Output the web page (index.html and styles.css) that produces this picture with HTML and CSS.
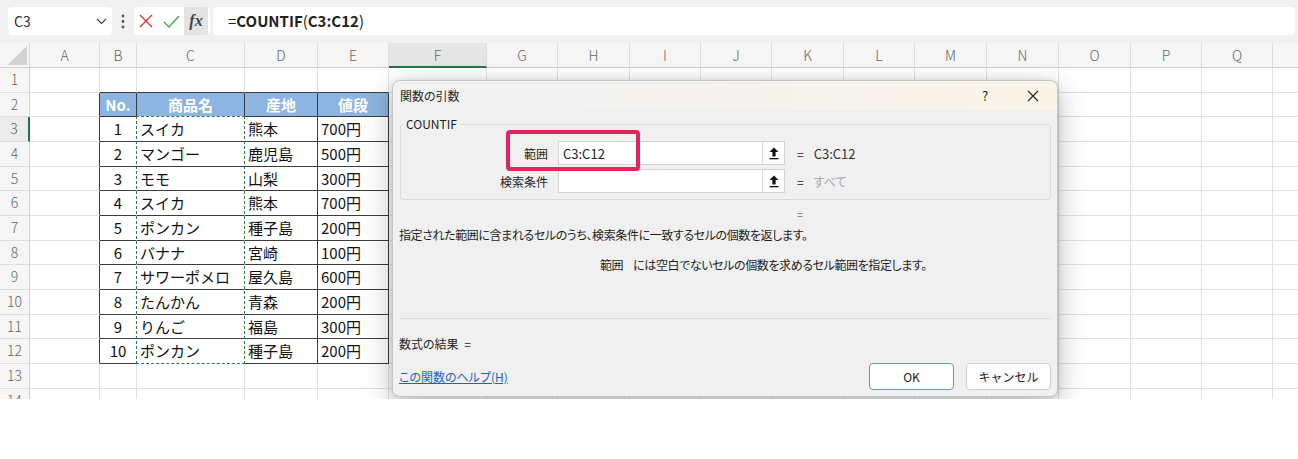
FILE: index.html
```html
<!DOCTYPE html>
<html lang="ja">
<head>
    <meta charset="UTF-8">
    <meta name="viewport" content="width=device-width, initial-scale=1.0">
    <title>関数の引数 | COUNTIF</title>
    <link rel="stylesheet" href="styles.css">
</head>
<body>
    <div class="app">
        <!-- 数式バー -->
        <div class="toolbar">
            <div class="namebox">
                <span>C3</span>
                <svg class="chev" width="11" height="7" viewBox="0 0 11 7"><path d="M1 1l4.5 4.5L10 1" fill="none" stroke="#444" stroke-width="1.2"/></svg>
            </div>
            <div class="grip">
                <svg width="4" height="15" viewBox="0 0 4 15"><circle cx="2" cy="2" r="1.4" fill="#555"/><circle cx="2" cy="7.5" r="1.4" fill="#555"/><circle cx="2" cy="13" r="1.4" fill="#555"/></svg>
            </div>
            <div class="fx-btns">
                <svg class="ico-x" width="14" height="14" viewBox="0 0 14 14"><path d="M1 1l12 12M13 1L1 13" stroke="#d13438" stroke-width="1.3"/></svg>
                <svg class="ico-ok" width="17" height="13" viewBox="0 0 17 13"><path d="M1 7l5 5L16 1" fill="none" stroke="#4f9e5a" stroke-width="1.3"/></svg>
                <span class="fx">fx</span>
            </div>
            <div class="formula">=<b>COUNTIF</b>(<b>C3:C12</b>)</div>
        </div>

        <!-- シート本体 (セルは script.js で生成) -->
        <div class="sheet" id="sheet">
            <div class="marquee"></div>
        </div>

        <!-- 関数の引数ダイアログ -->
        <div class="dlg">
            <div class="dlg-title">
                <span class="dlg-name">関数の引数</span>
                <span class="tbtn">?</span>
                <span class="tbtn">
                    <svg width="12" height="12" viewBox="0 0 12 12"><path d="M1 1l10 10M11 1L1 11" stroke="#222" stroke-width="1.1"/></svg>
                </span>
            </div>

            <fieldset class="grp">
                <legend>COUNTIF</legend>
                <div class="arg">
                    <label>範囲</label>
                    <div class="argbox">
                        <span class="argtext">C3:C12</span>
                        <span class="refbtn"><svg width="10" height="13" viewBox="0 0 10 13"><path d="M5 0.5L9.5 5H6.6v4.5H3.4V5H0.5z" fill="#111"/><rect x="0.5" y="11" width="9" height="1.3" fill="#111"/></svg></span>
                    </div>
                    <span class="eq">=</span>
                    <span class="argval">C3:C12</span>
                </div>
                <div class="arg">
                    <label>検索条件</label>
                    <div class="argbox">
                        <span class="argtext"></span>
                        <span class="refbtn"><svg width="10" height="13" viewBox="0 0 10 13"><path d="M5 0.5L9.5 5H6.6v4.5H3.4V5H0.5z" fill="#111"/><rect x="0.5" y="11" width="9" height="1.3" fill="#111"/></svg></span>
                    </div>
                    <span class="eq">=</span>
                    <span class="argval muted">すべて</span>
                </div>
            </fieldset>

            <div class="res-eq">=</div>
            <p class="desc">指定された範囲に含まれるセルのうち、検索条件に一致するセルの個数を返します。</p>
            <p class="pdesc"><span class="pname">範囲</span>には空白でないセルの個数を求めるセル範囲を指定します。</p>

            <div class="sep"></div>
            <div class="result">数式の結果 <span class="res-mark">=</span></div>

            <div class="dlg-foot">
                <a class="help" href="#">この関数のヘルプ(H)</a>
                <button class="btn btn-ok">OK</button>
                <button class="btn">キャンセル</button>
            </div>

            <!-- 強調枠 -->
            <div class="hilite"></div>
        </div>
    </div>

    <script src="script.js"></script>
</body>
</html>
```

FILE: styles.css
```css
:root {
    --ui-font: "Noto Sans CJK JP", "Liberation Sans", sans-serif;
    --grid-line: #e2e2e2;
    --table-line: #3c3c3c;
    --excel-green: #217346;
}

body {
    margin: 0;
    background: #fff;
    font-family: var(--ui-font);
}

.app {
    position: relative;
    height: 399px;
    overflow: hidden;
    background: #fff;
}

/* 数式バー */
.toolbar {
    height: 43px;
    box-sizing: border-box;
    padding: 7px 3px 8px 8px;
    background: #f1f1f1;
    display: flex;
}

.namebox {
    width: 104px;
    box-sizing: border-box;
    background: #fff;
    border-radius: 4px;
    display: flex;
    align-items: center;
    justify-content: space-between;
    padding: 0 5px 0 6px;
    font-size: 14px;
    color: #333;
}

.grip {
    width: 22px;
    display: flex;
    align-items: center;
    justify-content: center;
}

.fx-btns {
    width: 76px;
    background: #fff;
    border-radius: 4px;
    display: flex;
    align-items: center;
    overflow: hidden;
}

.ico-x { margin-left: 5px; }
.ico-ok { margin-left: 10px; }

.fx {
    margin-left: 4px;
    width: 24px;
    align-self: stretch;
    background: #e3e3e3;
    font-family: "Liberation Serif", serif;
    font-style: italic;
    font-weight: bold;
    font-size: 16px;
    color: #444;
    display: flex;
    align-items: center;
    justify-content: center;
}

.formula {
    flex: 1;
    margin-left: 3px;
    background: #fff;
    border-radius: 4px;
    padding-left: 15px;
    font-size: 15px;
    line-height: 28px;
    color: #222;
}

/* シート */
.sheet {
    position: relative;
    display: grid;
    grid-template-columns: 30px 70px 37px 108px 73px 71px 98px 71px 72px 71px 71px 72px 71px 72px 72px 72px 71px 71px 26px;
    grid-template-rows: 25px;
    grid-auto-rows: 24.67px;
}

.cell {
    box-sizing: border-box;
    border-right: 1px solid var(--grid-line);
    border-bottom: 1px solid var(--grid-line);
    padding: 0 3px;
    font-size: 15px;
    line-height: 23px;
    color: #111;
    white-space: nowrap;
    overflow: hidden;
}

.corner {
    background: linear-gradient(to top left, #d2d2d2 50%, transparent 50%) no-repeat 8px 3px / 19px 19px, #f6f6f6;
    border-right-color: #d6d6d6;
    border-bottom-color: #d0d0d0;
}

.ch {
    background: #f6f6f6;
    border-right-color: #dcdcdc;
    border-bottom-color: #d0d0d0;
    text-align: center;
    color: #666;
    font-size: 14px;
    font-weight: 300;
    line-height: 24px;
}

.ch.sel {
    background: #e6e6e6;
    border-bottom: 2px solid var(--excel-green);
}

.rh {
    background: #f6f6f6;
    border-right-color: #d0d0d0;
    border-bottom-color: #dedede;
    text-align: center;
    color: #666;
    font-size: 14px;
    font-weight: 300;
    padding: 0;
}

.rh.sel {
    background: #ececec;
    border-right: 2px solid var(--excel-green);
}

.edge-r { border-right-color: var(--table-line); }
.edge-b { border-bottom-color: var(--table-line); }

.tb {
    border-right-color: var(--table-line);
    border-bottom-color: var(--table-line);
}

.th {
    background: #8db4e2;
    color: #fff;
    font-weight: bold;
    text-align: center;
}

.num { text-align: center; }

/* コピー範囲の点線 */
.mq-r { border-right-color: #fff; }
.mq-b { border-bottom-color: #fff; }

.marquee {
    position: absolute;
    grid-column: 4 / 5;
    grid-row: 4 / 14;
    top: -1px;
    left: -1px;
    right: 0;
    bottom: 0;
    border: 1px dashed #2d7a4c;
    pointer-events: none;
}

/* ダイアログ */
.dlg {
    position: absolute;
    left: 392px;
    top: 80px;
    width: 666px;
    height: 317px;
    box-sizing: border-box;
    display: flex;
    flex-direction: column;
    background: #f0f0f0;
    border: 1px solid #c6c6c6;
    border-radius: 8px;
    box-shadow: 0 8px 28px rgba(0, 0, 0, 0.28), 0 0 6px rgba(0, 0, 0, 0.1);
    font-size: 12px;
    color: #1e1e1e;
    font-feature-settings: "palt";
}

.dlg-title {
    height: 29px;
    flex: none;
    display: flex;
    align-items: center;
    padding-left: 7px;
    border-radius: 8px 8px 0 0;
    background: linear-gradient(90deg, #f2f2f2 25%, #f7f3ed 65%, #fbf5e8 100%);
}

.dlg-name { flex: 1; }

.tbtn {
    width: 48px;
    text-align: center;
    font-size: 13px;
    display: flex;
    justify-content: center;
}

.grp {
    margin: 7px 6px 0 7px;
    padding: 10px 0 6px;
    border: 1px solid #dadada;
    border-radius: 3px;
    min-width: 0;
    display: flex;
    flex-direction: column;
    gap: 4px;
}

.grp legend {
    margin-left: 2px;
    padding: 0 3px;
    font-size: 12px;
    line-height: 14px;
}

.arg {
    display: flex;
    align-items: center;
    height: 24px;
}

.arg label {
    width: 147px;
    text-align: right;
}

.argbox {
    margin-left: 10px;
    width: 227px;
    height: 24px;
    box-sizing: border-box;
    background: #fff;
    border: 1px solid #d2d2d2;
    display: flex;
    align-items: center;
}

.argtext {
    flex: 1;
    padding-left: 4px;
    font-size: 13px;
    color: #222;
}

.refbtn {
    width: 21px;
    align-self: stretch;
    border-left: 1px solid #dcdcdc;
    display: flex;
    align-items: center;
    justify-content: center;
}

.eq {
    margin-left: 12px;
    font-size: 12px;
}

.argval {
    margin-left: 10px;
    font-size: 13px;
    color: #333;
}

.muted { color: #a8a8a8; font-size: 12px; }

.res-eq {
    margin-top: 6px;
    padding-left: 404px;
    line-height: 17px;
    color: #777;
    font-size: 11px;
}

.desc {
    margin: 3px 0 0 6px;
    line-height: 17px;
    letter-spacing: -0.4px;
}

.pdesc {
    margin: 13px 0 0 207px;
    line-height: 17px;
    letter-spacing: -0.4px;
}

.pname { margin-right: 10px; }

.sep {
    margin: 45px 6px 0 7px;
    border-top: 1px solid #dcdcdc;
}

.result {
    margin: 16px 0 0 6px;
    line-height: 17px;
}

.res-mark { margin-left: 3px; }

.dlg-foot {
    margin: 11px 6px 0 6px;
    display: flex;
    align-items: center;
    gap: 12px;
}

.help {
    flex: 1;
    color: #1a62c6;
    text-decoration: underline;
}

.btn {
    width: 85px;
    height: 27px;
    background: #fdfdfd;
    border: 1px solid #d0d0d0;
    border-radius: 4px;
    font-family: var(--ui-font);
    font-size: 12px;
    color: #1e1e1e;
    padding: 0;
}

.btn-ok { border-color: #6d95c8; }

.hilite {
    position: absolute;
    left: 113px;
    top: 49px;
    width: 134px;
    height: 41px;
    box-sizing: border-box;
    border: 4px solid #e4245e;
    border-radius: 4px;
}
```

FILE: script.js
```js
// シートのセルを組み立てる (R列は画面端で見切れるので見出しは空)
const COLS = 'ABCDEFGHIJKLMNOPQ'.split('').concat(['']);
const HEAD = ['No.', '商品名', '産地', '値段'];
const ITEMS = [
    ['スイカ', '熊本', '700円'],
    ['マンゴー', '鹿児島', '500円'],
    ['モモ', '山梨', '300円'],
    ['スイカ', '熊本', '700円'],
    ['ポンカン', '種子島', '200円'],
    ['バナナ', '宮崎', '100円'],
    ['サワーポメロ', '屋久島', '600円'],
    ['たんかん', '青森', '200円'],
    ['りんご', '福島', '300円'],
    ['ポンカン', '種子島', '200円']
];

const sheet = document.getElementById('sheet');

function addCell(cls, text) {
    const el = document.createElement('div');
    el.className = 'cell ' + cls;
    if (text !== undefined) el.textContent = text;
    sheet.appendChild(el);
}

// 列見出し
addCell('corner');
COLS.forEach(c => addCell('ch' + (c === 'F' ? ' sel' : ''), c));

// 各行
for (let r = 1; r <= 14; r++) {
    addCell('rh' + (r === 3 ? ' sel' : ''), r);
    COLS.forEach((c, i) => {
        const cls = [];
        let text;
        const inTable = i >= 1 && i <= 4 && r >= 2 && r <= 12;

        if (i === 0 && r >= 2 && r <= 12) cls.push('edge-r');
        if (i >= 1 && i <= 4 && r === 1) cls.push('edge-b');

        if (inTable) {
            cls.push('tb');
            if (r === 2) {
                cls.push('th');
                text = HEAD[i - 1];
                if (i === 2) cls.push('mq-b');
            } else {
                const row = ITEMS[r - 3];
                text = i === 1 ? String(r - 2) : row[i - 2];
                if (i === 1) cls.push('num');
                if (i === 1 || i === 2) cls.push('mq-r');
                if (i === 2 && r === 12) cls.push('mq-b');
            }
        }
        addCell(cls.join(' '), text);
    });
}
```
